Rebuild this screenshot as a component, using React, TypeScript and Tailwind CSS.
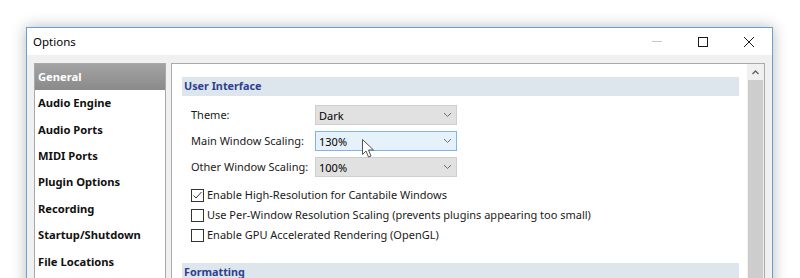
import React from "react"

const font = { fontFamily: '"Noto Sans", "Open Sans", sans-serif' }

const categories = [
    "General",
    "Audio Engine",
    "Audio Ports",
    "MIDI Ports",
    "Plugin Options",
    "Recording",
    "Startup/Shutdown",
    "File Locations",
]

function Chevron() {
    return (
        <svg width="9" height="6" viewBox="0 0 9 6" className="shrink-0">
            <path d="M1 1l3.5 3.5L8 1" fill="none" stroke="#6d6d6d" strokeWidth="1" />
        </svg>
    )
}

function Dropdown({ value, focused }: { value: string; focused?: boolean }) {
    return (
        <div
            className={
                focused
                    ? "w-[142px] h-[20px] flex items-center justify-between pl-[3px] pr-[4px] border border-[#7eb4ea] bg-[#e5f1fb]"
                    : "w-[142px] h-[20px] flex items-center justify-between pl-[3px] pr-[4px] border border-[#cfcfcf] bg-[#e1e1e1]"
            }
        >
            <span className="text-[11px] text-black leading-none">{value}</span>
            <Chevron />
        </div>
    )
}

function Checkbox({ checked, label }: { checked?: boolean; label: string }) {
    return (
        <div className="flex items-center h-[20px]">
            <div className="w-[13px] h-[13px] border border-[#333] bg-white flex items-center justify-center">
                {checked && (
                    <svg width="11" height="11" viewBox="0 0 11 11">
                        <path d="M1.5 5.5l2.5 2.5 5.5-6" fill="none" stroke="#333" strokeWidth="1" />
                    </svg>
                )}
            </div>
            <span className="ml-[3px] text-[11px] text-[#1a1a1a] whitespace-nowrap">{label}</span>
        </div>
    )
}

function Cursor() {
    return (
        <svg width="13" height="20" viewBox="0 0 13 20" className="absolute left-[362px] top-[139px]">
            <path
                d="M0.5 0.5v15l3.5-3.5 2.5 6 2.5-1-2.5-6h5z"
                fill="#fff"
                stroke="#555"
                strokeWidth="1"
                strokeLinejoin="round"
            />
        </svg>
    )
}

export default function App() {
    return (
        <div className="relative w-[800px] h-[278px] overflow-hidden bg-white" style={font}>
            <div className="ml-[26px] mt-[27px] w-[747px] h-[300px] border border-[#6a9fd6] bg-[#f0f0f0] shadow-[0_0_14px_rgba(0,0,0,0.28)] flex flex-col">
                {/* Title bar */}
                <div className="h-[27px] bg-white flex items-center shrink-0">
                    <span className="ml-[6px] text-[11.5px] text-black">Options</span>
                    <div className="ml-auto flex items-center">
                        <div className="w-[46px] flex justify-center">
                            <div className="w-[10px] h-px bg-[#c6c6c6]" />
                        </div>
                        <div className="w-[46px] flex justify-center">
                            <div className="w-[10px] h-[10px] border border-[#1a1a1a]" />
                        </div>
                        <div className="w-[46px] flex justify-center">
                            <svg width="10" height="10" viewBox="0 0 10 10">
                                <path d="M0 0L10 10M10 0L0 10" stroke="#1a1a1a" strokeWidth="1" />
                            </svg>
                        </div>
                    </div>
                </div>

                {/* Body */}
                <div className="flex flex-1 pt-[8px] pl-[7px] pr-[7px] gap-[5px]">
                    {/* Category list */}
                    <div className="w-[132px] border border-[#a9a9a9] bg-white flex flex-col">
                        {categories.map((c, i) => (
                            <div
                                key={c}
                                className={
                                    i === 0
                                        ? "h-[26.4px] flex items-center pl-[3px] text-[11.2px] font-bold text-white bg-gradient-to-b from-[#a3a3a3] to-[#8a8a8a]"
                                        : "h-[26.4px] flex items-center pl-[3px] text-[11.2px] font-bold text-[#111]"
                                }
                            >
                                {c}
                            </div>
                        ))}
                    </div>

                    {/* Settings panel */}
                    <div className="flex-1 border border-[#a9a9a9] bg-white flex">
                        <div className="flex-1 pl-[10px] pr-[8px] pt-[13px]">
                            <div className="h-[19px] bg-[#dde6ed] flex items-center pl-[2px]">
                                <span className="text-[10.8px] font-bold text-[#2e3f8f]">User Interface</span>
                            </div>

                            <div className="pl-[9px] pt-[9px] flex flex-col gap-[6px]">
                                {[
                                    ["Theme:", "Dark", false],
                                    ["Main Window Scaling:", "130%", true],
                                    ["Other Window Scaling:", "100%", false],
                                ].map(([label, value, focused]) => (
                                    <div key={label as string} className="flex items-center">
                                        <span className="w-[124px] text-[11px] text-[#1a1a1a] whitespace-nowrap">{label}</span>
                                        <Dropdown value={value as string} focused={focused as boolean} />
                                    </div>
                                ))}
                            </div>

                            <div className="pl-[9px] pt-[8px] flex flex-col">
                                <Checkbox checked label="Enable High-Resolution for Cantabile Windows" />
                                <Checkbox label="Use Per-Window Resolution Scaling (prevents plugins appearing too small)" />
                                <Checkbox label="Enable GPU Accelerated Rendering (OpenGL)" />
                            </div>

                            <div className="mt-[18px] h-[19px] bg-[#dde6ed] flex items-center pl-[2px]">
                                <span className="text-[10.8px] font-bold text-[#2e3f8f]">Formatting</span>
                            </div>
                        </div>

                        {/* Scrollbar */}
                        <div className="w-[17px] flex flex-col bg-[#f0f0f0]">
                            <div className="h-[16px] flex items-center justify-center">
                                <svg width="7" height="5" viewBox="0 0 7 5">
                                    <path d="M0.5 4L3.5 1l3 3" fill="none" stroke="#606060" strokeWidth="1.3" />
                                </svg>
                            </div>
                            <div className="flex-1 mx-px bg-[#cdcdcd]" />
                        </div>
                    </div>
                </div>
            </div>
            <Cursor />
        </div>
    )
}
